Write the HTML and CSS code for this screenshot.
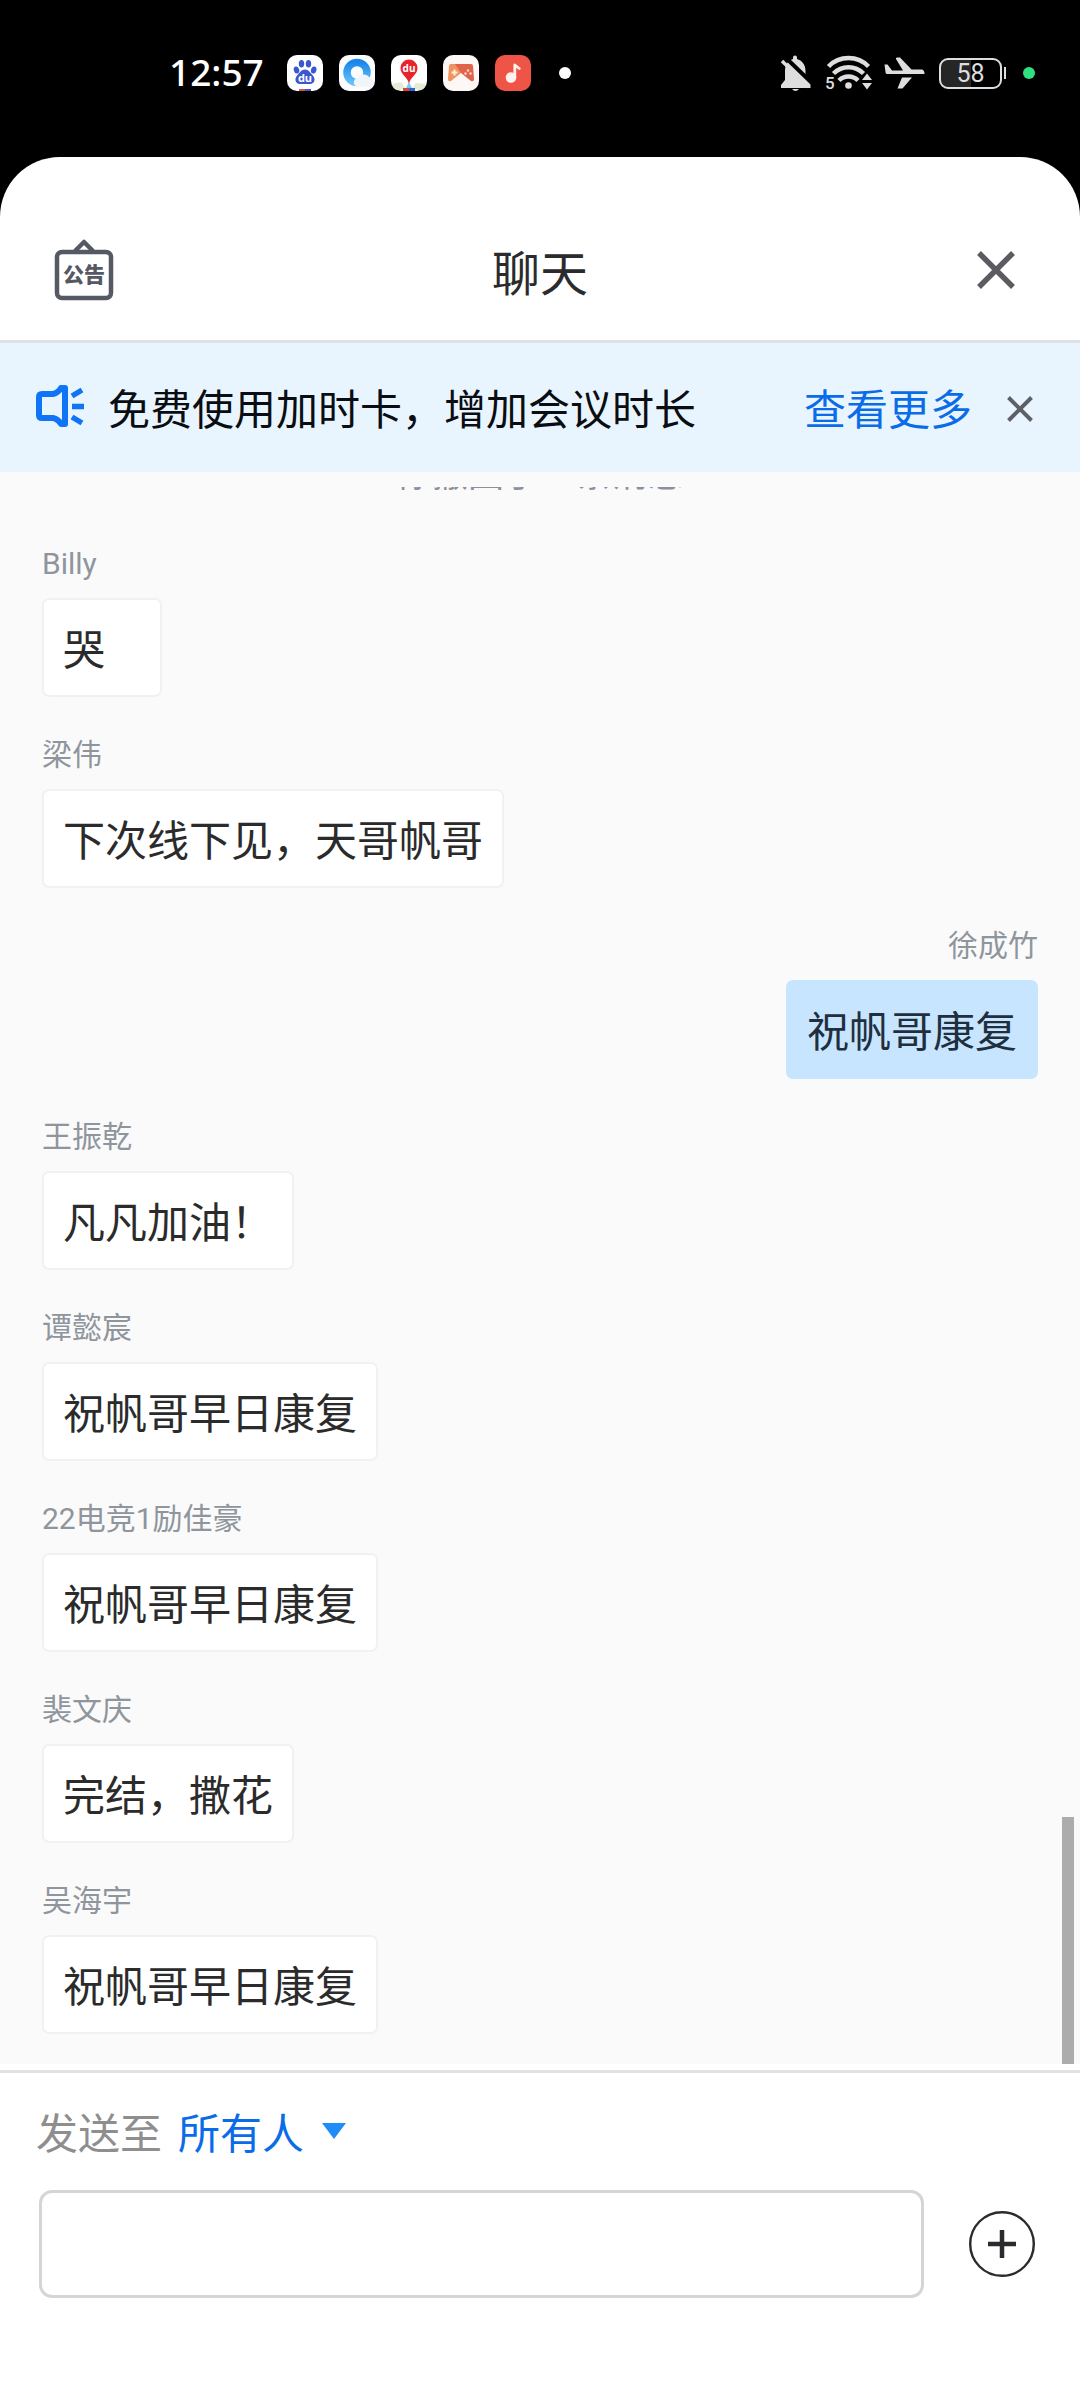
FILE: index.html
```html
<!DOCTYPE html>
<html lang="zh-CN">
<head>
<meta charset="utf-8">
<title>聊天</title>
<link rel="stylesheet" href="styles.css">
</head>
<body>
<div class="status">
  <span class="clock">12:57</span>
  <div class="apps">
    <svg class="app" viewBox="0 0 36 36"><rect width="36" height="36" rx="10" fill="#fff"/><g fill="#3b57cf"><ellipse cx="9.500" cy="15" rx="2.700" ry="3.600" transform="rotate(-15 9.500 15)"/><ellipse cx="14.500" cy="8.800" rx="2.700" ry="3.800"/><ellipse cx="21.500" cy="8.800" rx="2.700" ry="3.800"/><ellipse cx="26.700" cy="15" rx="2.700" ry="3.600" transform="rotate(15 26.700 15)"/><path d="M18 14.500c3.500 0 5 3 7.500 5.500c3.500 3.500 2.500 9-2.500 9h-10c-5 0-6-5.500-2.500-9c2.500-2.500 4-5.500 7.500-5.500z"/></g><text class="du du-paw" x="18" y="27">du</text><path d="M12 34h6v2h-6z" fill="#d5554e"/><path d="M18 34h6v2h-6z" fill="#3b57cf"/></svg>
    <svg class="app" viewBox="0 0 36 36"><defs><linearGradient id="ring" x1="0" y1="0" x2="0" y2="1"><stop offset="0" stop-color="#1c86ea"/><stop offset="1" stop-color="#63c1f7"/></linearGradient></defs><rect width="36" height="36" rx="10" fill="#fbfcfe"/><circle cx="18" cy="17.500" r="10" fill="none" stroke="url(#ring)" stroke-width="7.500"/><path d="M17 31.500a5 5 0 0 1 2-9a7 7 0 0 1 11.500 0a5 5 0 0 1 2 9z" fill="#f1f5fa"/></svg>
    <svg class="app" viewBox="0 0 36 36"><rect width="36" height="36" rx="10" fill="#fff"/><path d="M1 29l9-2 5 7-9 1q-4-1-5-6zM21 34l4-6 10 1q-1 5-5 6z" fill="#e3ecd3"/><path d="M14 35l4-8 4 8z" fill="#7dc6ee"/><path d="M18 29c-1-7-8.500-9-8.500-16a8.500 8.500 0 0 1 17 0c0 7-7.500 9-8.500 16z" fill="#e7232b"/><text class="du" x="18" y="17">du</text><path d="M12 33h6v3h-6z" fill="#d8453f"/><path d="M18 33h6v3h-6z" fill="#2b65d8"/></svg>
    <svg class="app" viewBox="0 0 36 36"><rect width="36" height="36" rx="10" fill="#fdf8f6"/><path d="M8 9h10v9L8 26q-3 1-3-2l1-13q0-2 2-2z" fill="#ee9460"/><path d="M28 9H12l6 9 10 8q3 1 3-2l-1-13q0-2-2-2z" fill="#e0634a"/><path d="M11.500 14.500v6M8.500 17.500h6" stroke="#fff0dc" stroke-width="2"/><g fill="#ffd9cf"><circle cx="25" cy="15.500" r="1.200"/><circle cx="22.500" cy="18.500" r="1.200"/><circle cx="27.500" cy="18.500" r="1.200"/></g></svg>
    <svg class="app" viewBox="0 0 36 36"><rect width="36" height="36" rx="10" fill="#ee5546"/><circle cx="16" cy="22.500" r="5.300" fill="#fff1ee"/><path d="M19.800 23V10l4.500 3.500" fill="none" stroke="#fff1ee" stroke-width="2.800" stroke-linejoin="round" stroke-linecap="round"/></svg>
  </div>
  <i class="more-dot"></i>
  <svg class="signals" viewBox="0 0 150 36">
    <path d="M1 33v-3l4-5V16C5 9 8.500 5.500 13 4V2.500a2 2 0 0 1 4 0V4c5 1.500 8.500 5.500 8.500 12v6l5 4.500V33zM12 34h7q-3.500 4-7 0z" fill="#dedede"/>
    <path d="M4 1l30 29" stroke="#000" stroke-width="4"/><path d="M2 6l27 26" stroke="#dedede" stroke-width="3.500"/>
    <g fill="none" stroke="#dedede" stroke-width="4.500"><path d="M48.500 11.500a28 28 0 0 1 40 0"/><path d="M53.500 18.500a21 21 0 0 1 30 0"/><path d="M59 25.500a13.500 13.500 0 0 1 19 0"/></g>
    <circle cx="68.500" cy="30.500" r="3.300" fill="#dedede"/>
    <path d="M81 24v12h12V24z" fill="#000"/>
    <path d="M82 25l5-6.500 5 6.500zM82 28l5 6.500 5-6.500z" fill="#dedede"/>
    <text class="band" x="45" y="34">5</text>
    <path d="M104.500 9.500h3l4.500 6h11L116 4q-.5-1.500 1-1.500h3L131.500 14.500h10.500q2.500 .5 2.500 4.500H107q-1.500-.2-1.500-2zM122 22.500h10L122.500 33.500h-5z" fill="#dedede"/>
  </svg>
  <div class="battery">58</div>
  <i class="nub"></i>
  <i class="live"></i>
</div>

<main class="sheet">
  <header class="head">
    <svg class="notice" viewBox="0 0 60 62"><path d="M21 12l9-9 9 9" fill="none" stroke="#555963" stroke-width="4.500" stroke-linejoin="round"/><rect x="3" y="13" width="54" height="46" rx="5" fill="none" stroke="#555963" stroke-width="4.500"/><text x="30" y="42.500">公告</text></svg>
    <h1 class="title">聊天</h1>
    <svg class="close" viewBox="0 0 38 38"><path d="M2 2l34 34M36 2L2 36" stroke="#5b5b61" stroke-width="5.500"/></svg>
  </header>

  <section class="banner">
    <svg class="horn" viewBox="0 0 48 42"><g fill="none" stroke="#0f74f5" stroke-width="6"><path d="M6 9h11q5-1 8-6h4v36h-4q-3-5-8-6H6q-3 0-3-3V12q0-3 3-3z" stroke-linejoin="round"/><path d="M36 11l10-6M36 21.500h12M36 32l10 6" stroke-width="5.500"/></g></svg>
    <span class="promo">免费使用加时卡，增加会议时长</span>
    <span class="link">查看更多</span>
    <svg class="dismiss" viewBox="0 0 26 26"><path d="M1.500 1.500l23 23M24.500 1.500l-23 23" stroke="#5d6166" stroke-width="4"/></svg>
  </section>

  <section class="chat">
    <div class="list">
      <p class="recall">你撤回了一条消息</p>
      <div class="msg"><span class="name">Billy</span><p class="bubble">哭</p></div>
      <div class="msg"><span class="name">梁伟</span><p class="bubble">下次线下见，天哥帆哥</p></div>
      <div class="msg mine"><span class="name">徐成竹</span><p class="bubble">祝帆哥康复</p></div>
      <div class="msg"><span class="name">王振乾</span><p class="bubble">凡凡加油！</p></div>
      <div class="msg"><span class="name">谭懿宸</span><p class="bubble">祝帆哥早日康复</p></div>
      <div class="msg"><span class="name">22电竞1励佳豪</span><p class="bubble">祝帆哥早日康复</p></div>
      <div class="msg"><span class="name">裴文庆</span><p class="bubble">完结，撒花</p></div>
      <div class="msg"><span class="name">吴海宇</span><p class="bubble">祝帆哥早日康复</p></div>
    </div>
    <i class="thumb"></i>
  </section>

  <footer class="composer">
    <div class="to"><span class="to-label">发送至</span><span class="to-who">所有人</span><svg class="caret" viewBox="0 0 24 16"><path d="M0 0h24L12 16z" fill="#1f8df8"/></svg></div>
    <div class="entry">
      <div class="field"></div>
      <svg class="plus" viewBox="0 0 66 66"><circle cx="33" cy="33" r="31.800" fill="none" stroke="#2b2b2e" stroke-width="2.400"/><path d="M33 19v28M19 33h28" stroke="#2b2b2e" stroke-width="4.500"/></svg>
    </div>
  </footer>
</main>
</body>
</html>
```
FILE: styles.css
```css
* { box-sizing: border-box; margin: 0; padding: 0; }
body {
  width: 1080px;
  height: 2400px;
  background: #000;
  font-family: "Noto Sans CJK SC", sans-serif;
  display: flex;
  flex-direction: column;
  overflow: hidden;
}
svg { display: block; flex: none; }
i { display: block; flex: none; }

.status {
  height: 157px;
  padding: 37px 0 48px 169px;
  display: flex;
  align-items: center;
  flex: none;
}
.clock {
  width: 118px;
  padding-bottom: 2px;
  color: #fff;
  font: 500 37px/40px "Noto Sans", sans-serif;
  white-space: nowrap;
}
.apps { display: flex; gap: 16px; }
.app { width: 36px; height: 36px; }
.du { font: 700 10px "Open Sans", sans-serif; fill: #fff; text-anchor: middle; }
.du-paw { font-size: 11px; }
.more-dot { width: 12px; height: 12px; border-radius: 50%; background: #fff; margin-left: 28px; }
.signals { width: 150px; height: 36px; margin-left: 209px; }
.band { font: 500 17px Roboto, sans-serif; fill: #dedede; }
.battery {
  width: 63px;
  height: 31px;
  margin-left: 9px;
  border: 2px solid #dedede;
  border-radius: 9px;
  background: linear-gradient(90deg, #262626 0 50%, #000 50%);
  color: #dedede;
  font: 400 25px/28px Roboto, sans-serif;
  text-align: center;
}
.nub { width: 2px; height: 12px; margin-left: 2px; background: #dedede; }
.live { width: 12px; height: 12px; margin-left: 17px; border-radius: 50%; background: #2fe07c; }

.sheet {
  flex: 1;
  display: flex;
  flex-direction: column;
  background: #fff;
  border-radius: 60px 60px 0 0;
  overflow: hidden;
}
.head {
  height: 186px;
  padding: 43px 65px 0 54px;
  border-bottom: 3px solid #dde1e6;
  display: grid;
  grid-template-columns: 60px 1fr 38px;
  align-items: center;
  flex: none;
}
.notice { width: 60px; height: 62px; }
.notice text { font: 900 21px "Noto Sans CJK SC", sans-serif; fill: #555963; text-anchor: middle; }
.title {
  padding: 0 11px 1px 0;
  text-align: center;
  font-size: 48px;
  line-height: 48px;
  font-weight: 400;
  color: #2b2b2d;
}
.close { width: 38px; height: 38px; }

.banner {
  height: 129px;
  padding: 0 47px 0 36px;
  background: #e9f5fe;
  display: flex;
  align-items: center;
  flex: none;
  font-size: 42px;
  line-height: 48px;
}
.horn { width: 48px; height: 42px; margin: 0 24px 3px 0; }
.promo { flex: 1; color: #0a0d12; padding-bottom: 2px; }
.link { color: #0b6ce8; margin-right: 35px; padding-bottom: 2px; }
.dismiss { width: 26px; height: 26px; margin-top: 2px; }

.chat {
  height: 1592px;
  padding: 15px 6px 0 0;
  background: #fafafb;
  display: flex;
  justify-content: space-between;
  flex: none;
}
.list {
  width: 1062px;
  padding: 0 24px 0 42px;
  overflow: hidden;
}
.recall {
  margin: -34px 0 60px -6px;
  width: 1008px;
  font-size: 36px;
  line-height: 36px;
  text-align: center;
  color: #8a919b;
}
.msg {
  display: flex;
  flex-direction: column;
  align-items: flex-start;
  gap: 19px;
  margin-bottom: 43px;
}
.name {
  font: 400 30px/30px Roboto, "Noto Sans CJK SC", sans-serif;
  color: #8f959c;
}
.bubble {
  min-width: 120px;
  height: 99px;
  padding: 0 19px;
  border: 2px solid #f1f1f2;
  border-radius: 7px;
  background: #fff;
  color: #2b2b2c;
  font-size: 42px;
  line-height: 93px;
  white-space: nowrap;
}
.mine { align-items: flex-end; }
.mine .bubble { background: #c7e5ff; border-color: #c7e5ff; color: #1f2f3e; }
.thumb { width: 12px; height: 247px; align-self: flex-end; background: #acacac; }

.composer {
  flex: 1;
  margin-top: 6px;
  border-top: 3px solid #e1e1e1;
  padding: 34px 45px 0 36px;
}
.to {
  display: flex;
  align-items: center;
  font-size: 42px;
  line-height: 48px;
}
.to-label { color: #8e8e8e; margin-right: 16px; }
.to-who { color: #0b6ce8; margin-right: 18px; }
.caret { width: 24px; height: 16px; }
.entry {
  margin: 35px 0 0 3px;
  display: flex;
  align-items: center;
  justify-content: space-between;
}
.field { width: 885px; height: 108px; border: 3px solid #d5d5d5; border-radius: 13px; }
.plus { width: 66px; height: 66px; }
```
